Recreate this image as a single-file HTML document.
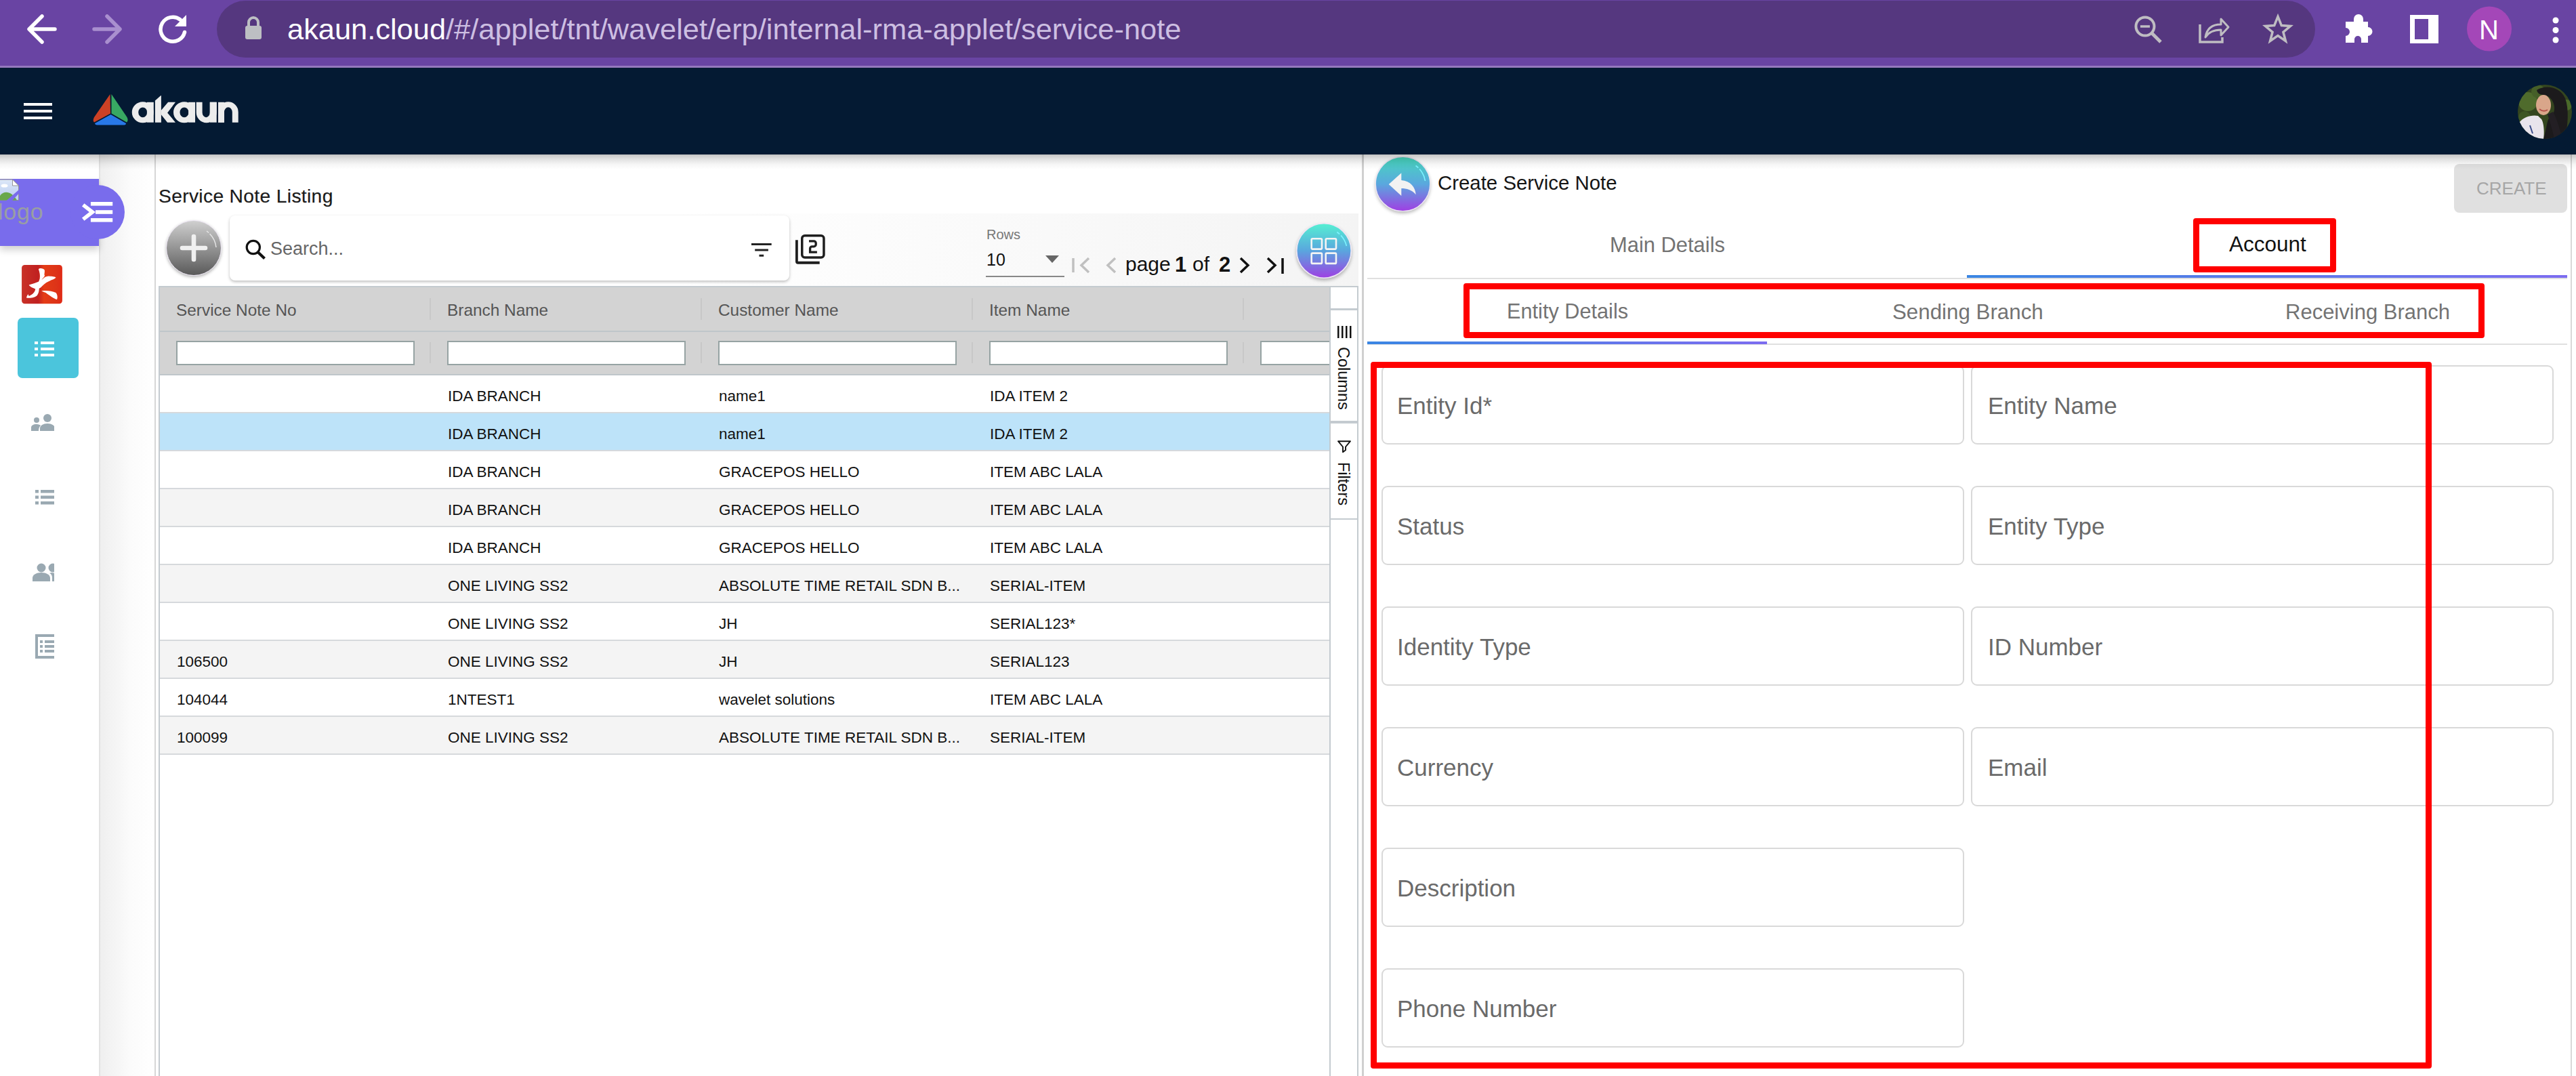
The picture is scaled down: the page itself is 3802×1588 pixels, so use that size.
<!DOCTYPE html>
<html><head><meta charset="utf-8">
<style>
*{box-sizing:border-box;margin:0;padding:0}
html,body{width:3802px;height:1588px;overflow:hidden;background:#fff;font-family:"Liberation Sans",sans-serif;position:relative}
.a{position:absolute}
.t{position:absolute;white-space:nowrap;line-height:1}
</style></head><body>
<!-- browser bar -->
<div class="a" style="left:0;top:0;width:3802px;height:97px;background:#6944a3"></div>
<div class="a" style="left:0;top:97px;width:3802px;height:3px;background:#9479bd"></div>
<div class="a" style="left:320px;top:1px;width:3097px;height:84px;border-radius:42px;background:#55377f"></div>
<!-- nav -->
<div class="a" style="left:0;top:100px;width:3802px;height:128px;background:#041a33"></div>

<!-- browser icons -->
<svg class="a" style="left:0;top:0" width="420" height="97" viewBox="0 0 420 97">
 <g fill="none" stroke="#fff" stroke-width="5.5" stroke-linecap="round" stroke-linejoin="round">
  <path d="M81 43H44M62 24L43 43L62 62"/>
 </g>
 <g fill="none" stroke="#a98fcf" stroke-width="5.5" stroke-linecap="round" stroke-linejoin="round">
  <path d="M139 43H176M158 24L177 43L158 62"/>
 </g>
 <path d="M272.5 47.5A18 18 0 1 1 266 29" fill="none" stroke="#fff" stroke-width="5.5" stroke-linecap="round"/>
 <path d="M275 22V39H258Z" fill="#fff"/>
 <rect x="362" y="38" width="24" height="20" rx="3" fill="#bdbfc3"/>
 <path d="M367 39V33A7 7 0 0 1 381 33V39" fill="none" stroke="#bdbfc3" stroke-width="4"/>
</svg>
<div class="t" style="left:424px;top:22px;font-size:43.4px;color:#fff">akaun.cloud<span style="color:#cdbfe2">/#/applet/tnt/wavelet/erp/internal-rma-applet/service-note</span></div>
<svg class="a" style="left:3100px;top:0" width="702" height="97" viewBox="3100 0 702 97">
 <g fill="none" stroke="#bfbdc2" stroke-width="4">
  <circle cx="3166" cy="39" r="13.5"/>
  <path d="M3159 39H3173" stroke-width="3.5"/>
  <path d="M3176 49L3189 62" stroke-width="5" stroke-linecap="butt"/>
 </g>
 <g fill="none" stroke="#bfbdc2" stroke-width="3.5">
  <path d="M3247 36V62H3280V55"/>
  <path d="M3255 55C3257 42 3265 36 3278 36V28L3289 40L3278 52V44C3268 44 3260 47 3255 55Z" stroke-width="3" stroke-linejoin="round"/>
 </g>
 <path d="M3362 25L3368 40L3383 41L3371 51L3375 66L3362 57L3349 66L3353 51L3341 41L3356 40Z" fill="none" stroke="#bfbdc2" stroke-width="4" stroke-linejoin="miter" transform="translate(3362,42) scale(0.88) translate(-3362,-45)"/>
 <path d="M3462 32H3474V28A7 7 0 0 1 3488 28V32H3495V40A6.5 6.5 0 0 1 3495 53V63H3485V58A5 5 0 0 0 3475 58V63H3462V53A6 6 0 0 0 3462 41Z" fill="#fff"/>
 <path d="M3557 22H3599V64H3557ZM3564 28V58H3584V28Z" fill="#fff" fill-rule="evenodd"/>
 <circle cx="3674" cy="42.5" r="33" fill="#a447b8"/>
 <circle cx="3772" cy="30" r="4.5" fill="#fff"/><circle cx="3772" cy="44.5" r="4.5" fill="#fff"/><circle cx="3772" cy="59" r="4.5" fill="#fff"/>
</svg>
<div class="t" style="left:3659px;top:24px;font-size:40px;color:#fff">N</div>
<!-- nav content -->
<div class="a" style="left:35px;top:152px;width:42px;height:4px;background:#fff"></div>
<div class="a" style="left:35px;top:162px;width:42px;height:4px;background:#fff"></div>
<div class="a" style="left:35px;top:172px;width:42px;height:4px;background:#fff"></div>
<svg class="a" style="left:130px;top:130px" width="70" height="60" viewBox="130 130 70 60">
 <path d="M162.5 139L163 167.5L139 180.5C137 179 137.5 176 139 173Z" fill="#cc4125"/>
 <path d="M164.5 139L187.5 173C189 176 189 179 187 180.5L164.5 167.5Z" fill="#38a862"/>
 <path d="M163.5 169L186 182C186 184 184.5 184.5 182 184.5H145C142 184.5 140 184 140 182Z" fill="#2878e8"/>
</svg>
<svg class="a" style="left:180px;top:130px" width="190" height="60" viewBox="180 130 190 60" fill="#ececec">
<path fill-rule="evenodd" d="M194.75 165.75A16 15.5 0 1 0 226.75 165.75A16 15.5 0 1 0 194.75 165.75ZM204.2 165.8A6.5 7.4 0 1 0 217.2 165.8A6.5 7.4 0 1 0 204.2 165.8Z"/><rect x="216.9" y="150.8" width="9.9" height="29.9"/><path fill-rule="evenodd" d="M256.0 165.75A16 15.5 0 1 0 288.0 165.75A16 15.5 0 1 0 256.0 165.75ZM265.45 165.8A6.5 7.4 0 1 0 278.45 165.8A6.5 7.4 0 1 0 265.45 165.8Z"/><rect x="278.15" y="150.8" width="9.9" height="29.9"/>
<path d="M228.9 148.5L237.4 141H237.9V180.7H228.9Z"/>
<path d="M237.9 162.7L248.1 150.8H259L247.1 166.4L259 180.7H247.1L237.9 169.3Z"/>
<path d="M289.7 150.8H298.6V166A5.6 7.2 0 0 0 309.8 166V150.8H319.7V166A15 15.2 0 0 1 289.7 166Z"/><rect x="309.8" y="150.8" width="9.9" height="29.9"/>
<path d="M322 165.5A14.85 15.2 0 0 1 351.7 165.5V180.7H342.8V165.5A5.95 7.2 0 0 0 330.9 165.5V180.7H322Z"/><rect x="322" y="150.8" width="8.9" height="29.9"/>
</svg>
<svg class="a" style="left:3716px;top:125px" width="80" height="80" viewBox="0 0 80 80">
 <defs><clipPath id="av"><circle cx="40" cy="40" r="40"/></clipPath></defs>
 <g clip-path="url(#av)">
  <rect width="80" height="80" fill="#34451f"/>
  <circle cx="15" cy="25" r="14" fill="#4f6b2c"/><circle cx="30" cy="10" r="10" fill="#465f28"/><circle cx="10" cy="48" r="9" fill="#3e5624"/><circle cx="72" cy="30" r="8" fill="#4a6a2a"/>
  <path d="M28 8C40 0 62 2 70 20C76 36 74 60 70 80H38C44 62 42 50 50 46C58 38 54 20 42 16C36 14 30 16 28 8Z" fill="#1c1a1c"/>
  <ellipse cx="38" cy="30" rx="11" ry="15" fill="#d9a68a"/>
  <path d="M32 36Q38 41 44 37" stroke="#b5524a" stroke-width="2" fill="none"/>
  <path d="M2 56C8 48 20 44 30 46L34 50C38 52 40 70 38 80H0Z" fill="#e9e4ec"/>
  <path d="M18 60L22 72" stroke="#3b4d8a" stroke-width="2"/>
  <path d="M44 44C48 56 52 70 54 80H66C62 66 58 50 52 40Z" fill="#231f24"/>
 </g>
</svg>
<!-- sidebar -->
<div class="a" style="left:0;top:228px;width:146px;height:1360px;background:#fff"></div>
<div class="a" style="left:146px;top:228px;width:2px;height:1360px;background:#e2e2e2"></div>
<div class="a" style="left:148px;top:228px;width:80px;height:1360px;background:linear-gradient(90deg,#efefef,#fbfbfb 55%,#fff)"></div>
<div class="a" style="left:228px;top:228px;width:2px;height:1360px;background:#d6d6d6"></div>

<!-- sidebar items -->
<div class="a" style="left:0;top:264px;width:146px;height:99px;background:#796cec;box-shadow:0 6px 10px rgba(0,0,0,0.18)"></div>
<div class="a" style="left:104px;top:273px;width:80px;height:80px;border-radius:50%;background:#796cec"></div>
<svg class="a" style="left:0;top:264px" width="30" height="33" viewBox="0 0 30 33">
 <defs><linearGradient id="sky" x1="0" x2="0" y1="0" y2="1"><stop offset="0" stop-color="#dce7f8"/><stop offset="1" stop-color="#b9cdf0"/></linearGradient></defs>
 <path d="M-1 1H18.5L27.5 10V31.5H-1Z" fill="url(#sky)" stroke="#8c8c8c" stroke-width="0.9"/>
 <path d="M18.5 1V10H27.5Z" fill="#fff" stroke="#8c8c8c" stroke-width="0.9"/>
 <ellipse cx="6.5" cy="10" rx="5" ry="2.6" fill="#fff"/>
 <path d="M-1 26C5 17 16 17 25 31.5H-1Z" fill="#68a84a"/>
 <path d="M28.5 15.5V21L18 32H9.5Z" fill="#796cec"/>
</svg>
<div class="t" style="left:-3px;top:295px;font-size:34px;letter-spacing:0.8px;color:#999ea3">logo</div>
<svg class="a" style="left:120px;top:296px" width="50" height="34" viewBox="0 0 50 34">
 <path d="M2.7 6.4L16.4 17L2.7 27.6" fill="none" stroke="#fff" stroke-width="5.6"/>
 <rect x="13.9" y="2" width="32.3" height="5.6" fill="#fff"/><rect x="21" y="14.2" width="25.2" height="5.6" fill="#fff"/><rect x="13.9" y="26" width="32.3" height="5.6" fill="#fff"/>
</svg>
<svg class="a" style="left:20px;top:380px" width="90" height="80" viewBox="0 0 1210 1076">
 <defs><linearGradient id="rg" x1="0" x2="1" y1="0" y2="0"><stop offset="0" stop-color="#c93228"/><stop offset="0.4" stop-color="#c02020"/><stop offset="0.55" stop-color="#e43c16"/><stop offset="0.85" stop-color="#dd3418"/><stop offset="1" stop-color="#e02a16"/></linearGradient></defs>
 <rect x="162" y="148" width="805" height="770" rx="60" fill="url(#rg)"/>
 <g fill="#fff">
 <path d="M495 230C520 200 600 215 615 250C625 300 600 340 620 360C600 400 540 450 520 520C500 600 520 680 470 750C430 800 330 810 255 800C260 770 280 740 290 730L305 765C380 740 420 690 430 640C450 560 500 500 520 420C530 360 520 300 495 230Z"/>
 <path d="M305 545C380 520 450 500 520 470C600 420 620 370 700 370C770 375 830 380 840 400C820 430 700 460 620 520C560 570 540 600 520 610C470 625 430 640 420 620C380 600 330 590 305 545Z"/>
 <path d="M555 665C640 650 760 660 840 700C870 730 880 800 860 835C800 820 720 760 640 700C600 680 570 675 555 665Z"/>
 </g>
</svg>

<div class="a" style="left:26px;top:469px;width:90px;height:89px;border-radius:7px;background:#4bc5dc"></div>
<svg class="a" style="left:51px;top:503px" width="40" height="24" viewBox="0 0 40 24" fill="#fff">
 <rect x="0" y="1" width="5" height="4"/><rect x="9" y="1" width="20" height="4"/>
 <rect x="0" y="10" width="5" height="4"/><rect x="9" y="10" width="20" height="4"/>
 <rect x="0" y="19" width="5" height="4"/><rect x="9" y="19" width="20" height="4"/>
</svg>
<svg class="a" style="left:40px;top:600px" width="50" height="400" viewBox="40 600 50 400" fill="#9aa9b2">
 <circle cx="54" cy="620" r="4"/><path d="M46 636V631C46 628 49 626 54 626C57 626 59 627 60 628C58 630 57 632 57 636Z"/>
 <circle cx="70" cy="617" r="6"/><path d="M59 636V632C59 628 64 625 70 625C76 625 81 628 81 632V636Z"/>
 <rect x="52" y="723" width="5" height="4.5"/><rect x="60" y="723" width="20" height="4.5"/>
 <rect x="52" y="731.5" width="5" height="4.5"/><rect x="60" y="731.5" width="20" height="4.5"/>
 <rect x="52" y="740" width="5" height="4.5"/><rect x="60" y="740" width="20" height="4.5"/>
 <circle cx="61" cy="838" r="6.5"/><path d="M48 858V853C48 848 54 845 61 845C68 845 74 848 74 853V858Z"/>
 <circle cx="78" cy="838" r="6.5"/><path d="M76 845C80 845 86 848 86 853V858H77V853C77 850 76 847 73 846Z"/>
 <path d="M52 936H84V972H52ZM56 940V968H84V940Z" fill-rule="evenodd"/>
 <rect x="59" y="945" width="4" height="4"/><rect x="66" y="945" width="18" height="4"/>
 <rect x="59" y="952" width="4" height="4"/><rect x="66" y="952" width="18" height="4"/>
 <rect x="59" y="959" width="4" height="4"/><rect x="66" y="959" width="18" height="4"/>
</svg>
<div class="a" style="left:80px;top:600px;width:66px;height:400px;background:#fff"></div>
<!-- left content -->
<div class="t" style="left:234px;top:275px;font-size:28.2px;letter-spacing:0.35px;color:#1a1a1a;-webkit-text-stroke:0.2px #1a1a1a">Service Note Listing</div>

<!-- toolbar -->
<div class="a" style="left:1000px;top:315px;width:1005px;height:107px;background:linear-gradient(90deg,rgba(245,245,245,0),#f4f4f4)"></div>
<div class="a" style="left:245px;top:325px;width:82px;height:82px;border-radius:50%;background:linear-gradient(#cfcfcf,#5a5a5a);border:1.5px solid #ebe4f2;box-shadow:0 2px 4px rgba(0,0,0,0.3)"></div>
<svg class="a" style="left:245px;top:325px" width="82" height="82" viewBox="0 0 82 82">
 <path d="M41 40V10" fill="none"/>
 <path d="M60 16A34 34 0 0 1 74 40" fill="none" stroke="#e6e6e6" stroke-width="1.5" stroke-dasharray="4 2 40"/>
 <path d="M41 24V58M24 41H58" stroke="#f0f0f0" stroke-width="6.6" stroke-linecap="round"/>
</svg>
<div class="a" style="left:339px;top:318px;width:826px;height:96px;border-radius:8px;background:#fff;box-shadow:0 2px 4px rgba(0,0,0,0.26)"></div>
<svg class="a" style="left:360px;top:352px" width="36" height="34" viewBox="0 0 36 34"><circle cx="13.8" cy="13" r="9.6" fill="none" stroke="#111" stroke-width="3.2"/><path d="M20.5 20L30.5 29.5" stroke="#111" stroke-width="4.2"/></svg>
<div class="t" style="left:399px;top:354px;font-size:27px;color:#666">Search...</div>
<svg class="a" style="left:1105px;top:355px" width="40" height="28" viewBox="0 0 40 28" fill="#222"><rect x="4" y="4" width="29.7" height="3"/><rect x="9.2" y="12.5" width="19.7" height="3"/><rect x="15.5" y="20.7" width="6.7" height="3"/></svg>
<svg class="a" style="left:1170px;top:343px" width="52" height="52" viewBox="0 0 52 52" fill="none" stroke="#1e1e1e" stroke-width="3.5">
 <path d="M5.9 11.2V42.75A2 2 0 0 0 7.9 44.75H39.7" stroke-width="3.8"/>
 <rect x="13.75" y="4.75" width="32.2" height="32.2" rx="4"/>
 <path d="M24 12.9H31.2A3 3 0 0 1 34.2 15.9V17.8A3 3 0 0 1 31.2 20.8H28.6A3 3 0 0 0 25.6 23.8V29.2H35.9" stroke-width="3.3"/>
</svg>
<div class="t" style="left:1456px;top:336px;font-size:20px;color:#777">Rows</div>
<div class="t" style="left:1456px;top:371px;font-size:25px;color:#111">10</div>
<svg class="a" style="left:1540px;top:375px" width="26" height="16" viewBox="0 0 26 16"><path d="M3 2H23L13 13Z" fill="#666"/></svg>
<div class="a" style="left:1455px;top:407px;width:116px;height:2px;background:#888"></div>
<svg class="a" style="left:1578px;top:375px" width="330" height="34" viewBox="1578 375 330 34" fill="none" stroke-width="3.5">
 <path d="M1584 381V402" stroke="#c0c0c0"/><path d="M1607 381L1596 391.5L1607 402" stroke="#c0c0c0"/>
 <path d="M1646 381L1635 391.5L1646 402" stroke="#c0c0c0"/>
 <path d="M1831 381L1842 391.5L1831 402" stroke="#111"/>
 <path d="M1871 381L1882 391.5L1871 402" stroke="#111"/><path d="M1893 381V404" stroke="#111"/>
</svg>
<div class="t" style="left:1661px;top:375px;font-size:30px;color:#111">page</div>
<div class="t" style="left:1734px;top:375px;font-size:31px;color:#111;font-weight:700">1</div>
<div class="t" style="left:1760px;top:375px;font-size:30px;color:#111">of</div>
<div class="t" style="left:1799px;top:375px;font-size:31px;color:#111;font-weight:700">2</div>
<div class="a" style="left:1913px;top:329px;width:82px;height:82px;border-radius:50%;box-shadow:0 3px 5px rgba(0,0,0,0.28)"></div>
<svg class="a" style="left:1913px;top:329px" width="82" height="82" viewBox="0 0 82 82">
 <defs><linearGradient id="gg1" x1="0" x2="0" y1="0" y2="1"><stop offset="0" stop-color="#55f0d2"/><stop offset="0.5" stop-color="#5aa6de"/><stop offset="1" stop-color="#9e40e3"/></linearGradient></defs>
 <circle cx="41" cy="41" r="40.2" fill="url(#gg1)" stroke="#ede6f4" stroke-width="1.6"/>
 <path d="M60.3 13.5A34 34 0 0 1 74.4 34" fill="none" stroke="#7ef3ff" stroke-width="1.6" stroke-dasharray="5 2.5 60"/>
 <g fill="none" stroke="#f4f4f4" stroke-width="2.6"><rect x="22.7" y="23.3" width="15.3" height="15.3" rx="1.5"/><rect x="43.7" y="23.3" width="15.3" height="15.3" rx="1.5"/><rect x="22.7" y="44.6" width="15.3" height="15.3" rx="1.5"/><rect x="43.7" y="44.6" width="15.3" height="15.3" rx="1.5"/></g>
</svg>
<!-- table -->
<div class="a" style="left:234px;top:422px;width:1730px;height:1166px;border-left:2px solid #c4cbd0;border-right:2px solid #c4cbd0;border-top:2px solid #c4cbd0"></div>
<div class="a" style="left:236px;top:424px;width:1726px;height:129px;background:#d3d3d3"></div>
<div class="a" style="left:236px;top:488px;width:1726px;height:2px;background:#bfc6ca"></div>
<div class="a" style="left:236px;top:552px;width:1726px;height:2px;background:#bfc6ca"></div>
<div class="t" style="left:260px;top:446px;font-size:24.4px;color:#555">Service Note No</div>
<div class="a" style="left:260px;top:503px;width:352px;height:36px;background:#fff;border:2px solid #96a3a3"></div>
<div class="t" style="left:660px;top:446px;font-size:24.4px;color:#555">Branch Name</div>
<div class="a" style="left:660px;top:503px;width:352px;height:36px;background:#fff;border:2px solid #96a3a3"></div>
<div class="a" style="left:634px;top:440px;width:2px;height:32px;background:#c8c8c8"></div>
<div class="a" style="left:634px;top:505px;width:2px;height:31px;background:#c8c8c8"></div>
<div class="t" style="left:1060px;top:446px;font-size:24.4px;color:#555">Customer Name</div>
<div class="a" style="left:1060px;top:503px;width:352px;height:36px;background:#fff;border:2px solid #96a3a3"></div>
<div class="a" style="left:1034px;top:440px;width:2px;height:32px;background:#c8c8c8"></div>
<div class="a" style="left:1034px;top:505px;width:2px;height:31px;background:#c8c8c8"></div>
<div class="t" style="left:1460px;top:446px;font-size:24.4px;color:#555">Item Name</div>
<div class="a" style="left:1460px;top:503px;width:352px;height:36px;background:#fff;border:2px solid #96a3a3"></div>
<div class="a" style="left:1434px;top:440px;width:2px;height:32px;background:#c8c8c8"></div>
<div class="a" style="left:1434px;top:505px;width:2px;height:31px;background:#c8c8c8"></div>
<div class="a" style="left:1860px;top:503px;width:120px;height:36px;background:#fff;border:2px solid #96a3a3;border-right:none"></div>
<div class="a" style="left:1834px;top:440px;width:2px;height:32px;background:#c8c8c8"></div>
<div class="a" style="left:1834px;top:505px;width:2px;height:31px;background:#c8c8c8"></div>
<div class="a" style="left:236px;top:554px;width:1726px;height:56px;background:#fff;border-bottom:2px solid #d6d9dc"></div>
<div class="t" style="left:661px;top:574px;font-size:22.5px;color:#111">IDA BRANCH</div>
<div class="t" style="left:1061px;top:574px;font-size:22.5px;color:#111">name1</div>
<div class="t" style="left:1461px;top:574px;font-size:22.5px;color:#111">IDA ITEM 2</div>
<div class="a" style="left:236px;top:610px;width:1726px;height:56px;background:#bde3f9;border-bottom:2px solid #d6d9dc"></div>
<div class="t" style="left:661px;top:630px;font-size:22.5px;color:#111">IDA BRANCH</div>
<div class="t" style="left:1061px;top:630px;font-size:22.5px;color:#111">name1</div>
<div class="t" style="left:1461px;top:630px;font-size:22.5px;color:#111">IDA ITEM 2</div>
<div class="a" style="left:236px;top:666px;width:1726px;height:56px;background:#fff;border-bottom:2px solid #d6d9dc"></div>
<div class="t" style="left:661px;top:686px;font-size:22.5px;color:#111">IDA BRANCH</div>
<div class="t" style="left:1061px;top:686px;font-size:22.5px;color:#111">GRACEPOS HELLO</div>
<div class="t" style="left:1461px;top:686px;font-size:22.5px;color:#111">ITEM ABC LALA</div>
<div class="a" style="left:236px;top:722px;width:1726px;height:56px;background:#f4f4f4;border-bottom:2px solid #d6d9dc"></div>
<div class="t" style="left:661px;top:742px;font-size:22.5px;color:#111">IDA BRANCH</div>
<div class="t" style="left:1061px;top:742px;font-size:22.5px;color:#111">GRACEPOS HELLO</div>
<div class="t" style="left:1461px;top:742px;font-size:22.5px;color:#111">ITEM ABC LALA</div>
<div class="a" style="left:236px;top:778px;width:1726px;height:56px;background:#fff;border-bottom:2px solid #d6d9dc"></div>
<div class="t" style="left:661px;top:798px;font-size:22.5px;color:#111">IDA BRANCH</div>
<div class="t" style="left:1061px;top:798px;font-size:22.5px;color:#111">GRACEPOS HELLO</div>
<div class="t" style="left:1461px;top:798px;font-size:22.5px;color:#111">ITEM ABC LALA</div>
<div class="a" style="left:236px;top:834px;width:1726px;height:56px;background:#f4f4f4;border-bottom:2px solid #d6d9dc"></div>
<div class="t" style="left:661px;top:854px;font-size:22.5px;color:#111">ONE LIVING SS2</div>
<div class="t" style="left:1061px;top:854px;font-size:22.5px;color:#111">ABSOLUTE TIME RETAIL SDN B...</div>
<div class="t" style="left:1461px;top:854px;font-size:22.5px;color:#111">SERIAL-ITEM</div>
<div class="a" style="left:236px;top:890px;width:1726px;height:56px;background:#fff;border-bottom:2px solid #d6d9dc"></div>
<div class="t" style="left:661px;top:910px;font-size:22.5px;color:#111">ONE LIVING SS2</div>
<div class="t" style="left:1061px;top:910px;font-size:22.5px;color:#111">JH</div>
<div class="t" style="left:1461px;top:910px;font-size:22.5px;color:#111">SERIAL123*</div>
<div class="a" style="left:236px;top:946px;width:1726px;height:56px;background:#f4f4f4;border-bottom:2px solid #d6d9dc"></div>
<div class="t" style="left:261px;top:966px;font-size:22.5px;color:#111">106500</div>
<div class="t" style="left:661px;top:966px;font-size:22.5px;color:#111">ONE LIVING SS2</div>
<div class="t" style="left:1061px;top:966px;font-size:22.5px;color:#111">JH</div>
<div class="t" style="left:1461px;top:966px;font-size:22.5px;color:#111">SERIAL123</div>
<div class="a" style="left:236px;top:1002px;width:1726px;height:56px;background:#fff;border-bottom:2px solid #d6d9dc"></div>
<div class="t" style="left:261px;top:1022px;font-size:22.5px;color:#111">104044</div>
<div class="t" style="left:661px;top:1022px;font-size:22.5px;color:#111">1NTEST1</div>
<div class="t" style="left:1061px;top:1022px;font-size:22.5px;color:#111">wavelet solutions</div>
<div class="t" style="left:1461px;top:1022px;font-size:22.5px;color:#111">ITEM ABC LALA</div>
<div class="a" style="left:236px;top:1058px;width:1726px;height:56px;background:#f4f4f4;border-bottom:2px solid #d6d9dc"></div>
<div class="t" style="left:261px;top:1078px;font-size:22.5px;color:#111">100099</div>
<div class="t" style="left:661px;top:1078px;font-size:22.5px;color:#111">ONE LIVING SS2</div>
<div class="t" style="left:1061px;top:1078px;font-size:22.5px;color:#111">ABSOLUTE TIME RETAIL SDN B...</div>
<div class="t" style="left:1461px;top:1078px;font-size:22.5px;color:#111">SERIAL-ITEM</div>

<!-- side tabs -->
<div class="a" style="left:1962px;top:422px;width:43px;height:1166px;background:#fff;border-left:2px solid #c4cbd0;border-right:2px solid #c4cbd0"></div>
<div class="a" style="left:1964px;top:422px;width:39px;height:2px;background:#c4cbd0"></div>
<div class="a" style="left:1964px;top:455px;width:39px;height:3px;background:#c4cbd0"></div>
<div class="a" style="left:1964px;top:621px;width:39px;height:4px;background:#c4cbd0"></div>
<div class="a" style="left:1964px;top:765px;width:39px;height:2px;background:#c4cbd0"></div>
<svg class="a" style="left:1970px;top:478px" width="30" height="24" viewBox="0 0 30 24" fill="#111"><rect x="4" y="3" width="2.5" height="18"/><rect x="10" y="3" width="2.5" height="18"/><rect x="16" y="3" width="2.5" height="18"/><rect x="22" y="3" width="2.5" height="18"/></svg>
<div class="t" style="left:1973px;top:512px;font-size:23.5px;color:#111;transform-origin:0 0;transform:translate(21px,0) rotate(90deg)">Columns</div>
<svg class="a" style="left:1965px;top:640px" width="40" height="40" viewBox="1965 640 40 40"><path d="M1975 651.2H1993L1986 659.5V664.3L1982 667.2V659.5Z" fill="none" stroke="#111" stroke-width="1.9" stroke-linejoin="round"/></svg>
<div class="t" style="left:1973px;top:682px;font-size:23.5px;color:#111;transform-origin:0 0;transform:translate(21px,0) rotate(90deg)">Filters</div>

<!-- right panel -->
<div class="a" style="left:2029.5px;top:231px;width:81px;height:81px;border-radius:50%;box-shadow:0 3px 5px rgba(0,0,0,0.28)"></div>
<svg class="a" style="left:2029.5px;top:231px" width="81" height="81" viewBox="0 0 81 81">
 <defs><linearGradient id="gg2" x1="0" x2="0" y1="0" y2="1"><stop offset="0" stop-color="#46d8bc"/><stop offset="0.5" stop-color="#5aa8de"/><stop offset="1" stop-color="#a03ee3"/></linearGradient></defs>
 <circle cx="40.5" cy="40.5" r="40.3" fill="url(#gg2)" stroke="#ede6f4" stroke-width="1.4"/>
 <path d="M59.5 13.5A34 34 0 0 1 73.5 36" fill="none" stroke="#7ef3ff" stroke-width="1.6" stroke-dasharray="5 2.5 60"/>
 <path d="M19.7 40.9L38.3 24.2V34.9C52 36 59 45 59.7 56.3C54 49 46 47 38.3 47V58.1Z" fill="#f2f2f2"/>
</svg>
<div class="t" style="left:2122px;top:255px;font-size:29.4px;color:#151515">Create Service Note</div>
<div class="a" style="left:3622px;top:242px;width:167px;height:72px;border-radius:8px;background:#e0e0e0"></div>
<div class="t" style="left:3655px;top:265px;font-size:26px;color:#a6a6a6">CREATE</div>
<div class="t" style="left:2376px;top:347px;font-size:30.9px;color:#737373">Main Details</div>
<div class="t" style="left:3290px;top:345px;font-size:31.5px;color:#111">Account</div>
<div class="a" style="left:2018px;top:410px;width:1771px;height:2px;background:#e0e0e0"></div>
<div class="a" style="left:2903px;top:406px;width:886px;height:4px;background:linear-gradient(90deg,#3a86e3,#7c6cf0)"></div>
<div class="t" style="left:2224px;top:445px;font-size:30.7px;color:#737373">Entity Details</div>
<div class="t" style="left:2793px;top:445px;font-size:31.3px;color:#737373">Sending Branch</div>
<div class="t" style="left:3373px;top:445px;font-size:31px;color:#737373">Receiving Branch</div>
<div class="a" style="left:2018px;top:507px;width:1771px;height:2px;background:#e0e0e0"></div>
<div class="a" style="left:2018px;top:504px;width:590px;height:4px;background:linear-gradient(90deg,#3a86e3,#7c6cf0)"></div>
<div class="a" style="left:2039px;top:539px;width:860px;height:117px;border:2px solid #d9d9d9;border-radius:9px"></div>
<div class="t" style="left:2062px;top:581px;font-size:35px;color:#6a6a6a">Entity Id*</div>
<div class="a" style="left:2909px;top:539px;width:860px;height:117px;border:2px solid #d9d9d9;border-radius:9px"></div>
<div class="t" style="left:2934px;top:581px;font-size:35px;color:#6a6a6a">Entity Name</div>
<div class="a" style="left:2039px;top:717px;width:860px;height:117px;border:2px solid #d9d9d9;border-radius:9px"></div>
<div class="t" style="left:2062px;top:759px;font-size:35px;color:#6a6a6a">Status</div>
<div class="a" style="left:2909px;top:717px;width:860px;height:117px;border:2px solid #d9d9d9;border-radius:9px"></div>
<div class="t" style="left:2934px;top:759px;font-size:35px;color:#6a6a6a">Entity Type</div>
<div class="a" style="left:2039px;top:895px;width:860px;height:117px;border:2px solid #d9d9d9;border-radius:9px"></div>
<div class="t" style="left:2062px;top:937px;font-size:35px;color:#6a6a6a">Identity Type</div>
<div class="a" style="left:2909px;top:895px;width:860px;height:117px;border:2px solid #d9d9d9;border-radius:9px"></div>
<div class="t" style="left:2934px;top:937px;font-size:35px;color:#6a6a6a">ID Number</div>
<div class="a" style="left:2039px;top:1073px;width:860px;height:117px;border:2px solid #d9d9d9;border-radius:9px"></div>
<div class="t" style="left:2062px;top:1115px;font-size:35px;color:#6a6a6a">Currency</div>
<div class="a" style="left:2909px;top:1073px;width:860px;height:117px;border:2px solid #d9d9d9;border-radius:9px"></div>
<div class="t" style="left:2934px;top:1115px;font-size:35px;color:#6a6a6a">Email</div>
<div class="a" style="left:2039px;top:1251px;width:860px;height:117px;border:2px solid #d9d9d9;border-radius:9px"></div>
<div class="t" style="left:2062px;top:1293px;font-size:35px;color:#6a6a6a">Description</div>
<div class="a" style="left:2039px;top:1429px;width:860px;height:117px;border:2px solid #d9d9d9;border-radius:9px"></div>
<div class="t" style="left:2062px;top:1471px;font-size:35px;color:#6a6a6a">Phone Number</div>

<!-- red boxes -->
<div class="a" style="left:3237px;top:322px;width:211px;height:80px;border:9px solid #ff0000;border-radius:4px"></div>
<div class="a" style="left:2160px;top:418px;width:1507px;height:81px;border:9px solid #ff0000;border-radius:4px"></div>
<div class="a" style="left:2023px;top:534px;width:1566px;height:1043px;border:9px solid #ff0000;border-radius:4px"></div>
<!-- right panel border -->
<div class="a" style="left:2010px;top:228px;width:3px;height:1360px;background:#d0d0d0"></div>
<div class="a" style="left:3794px;top:228px;width:2px;height:1360px;background:#d8d8d8"></div>
<div class="a" style="left:0;top:228px;width:3802px;height:22px;background:linear-gradient(rgba(0,0,0,0.23),rgba(0,0,0,0.12) 30%,rgba(0,0,0,0.04) 65%,rgba(0,0,0,0))"></div>
</body></html>
